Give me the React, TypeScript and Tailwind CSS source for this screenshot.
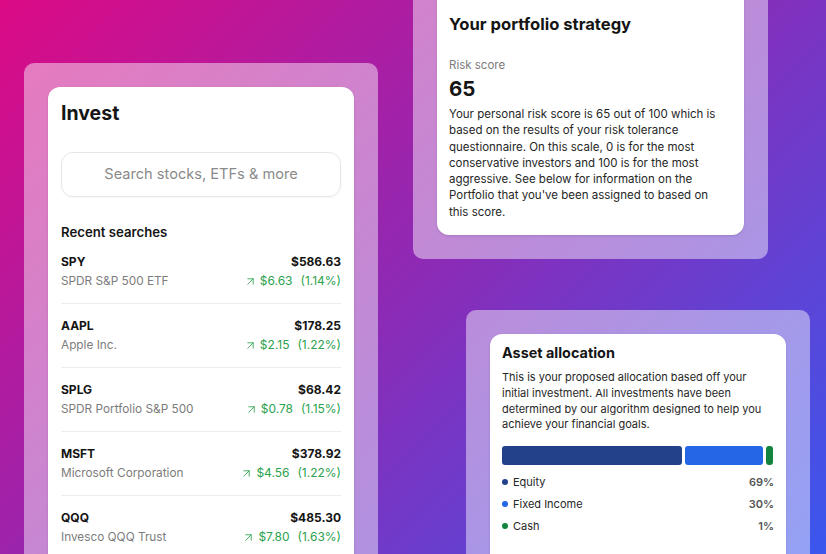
import React from "react";
import { ArrowUpRight } from "lucide-react";

const stocks = [
  { sym: "SPY", name: "SPDR S&P 500 ETF", price: "$586.63", chg: "$6.63", pct: "(1.14%)" },
  { sym: "AAPL", name: "Apple Inc.", price: "$178.25", chg: "$2.15", pct: "(1.22%)" },
  { sym: "SPLG", name: "SPDR Portfolio S&P 500", price: "$68.42", chg: "$0.78", pct: "(1.15%)" },
  { sym: "MSFT", name: "Microsoft Corporation", price: "$378.92", chg: "$4.56", pct: "(1.22%)" },
  { sym: "QQQ", name: "Invesco QQQ Trust", price: "$485.30", chg: "$7.80", pct: "(1.63%)" },
];

const allocation = [
  { label: "Equity", pct: "69%", dot: "bg-[#22418a]" },
  { label: "Fixed Income", pct: "30%", dot: "bg-[#2466e6]" },
  { label: "Cash", pct: "1%", dot: "bg-[#13843e]" },
];

const InvestCard = () => (
  <div className="absolute left-[24px] top-[63px] h-[540px] w-[354px] rounded-[10px] bg-white/45 p-[24px]">
    <div className="h-full rounded-[12px] bg-white px-[13px] pt-[12px] shadow-sm">
      <h1 className="text-[19.5px] font-bold leading-[28px] text-[#151515]">Invest</h1>
      <div className="mt-[25px] flex h-[45px] items-center justify-center rounded-[12px] border border-[#e6e6e6] text-[14.6px] text-[#8a8a8a] shadow-[0_1px_2px_rgba(0,0,0,0.04)]">
        Search stocks, ETFs &amp; more
      </div>
      <h2 className="mt-[27px] text-[13.2px] font-semibold leading-[16px] text-[#151515]">Recent searches</h2>
      <ul>
        {stocks.map((s, i) => (
          <li
            key={s.sym}
            className={
              "flex justify-between pb-[13px] pt-[13px] " +
              (i < stocks.length - 1 ? "border-b border-[#ececec]" : "")
            }
          >
            <div className="flex flex-col gap-[1px]">
              <span className="text-[12px] font-bold leading-[18px] text-[#151515]">{s.sym}</span>
              <span className="text-[11.8px] leading-[18px] text-[#7c7c7c]">{s.name}</span>
            </div>
            <div className="flex flex-col items-end gap-[1px]">
              <span className="text-[12px] font-bold leading-[18px] text-[#151515]">{s.price}</span>
              <span className="flex items-center text-[12px] leading-[18px] text-[#2ca24e]">
                <ArrowUpRight size={13} strokeWidth={1.6} className="mr-[3px]" />
                {s.chg}
                <span className="ml-[8px]">{s.pct}</span>
              </span>
            </div>
          </li>
        ))}
      </ul>
    </div>
  </div>
);

const StrategyCard = () => (
  <div className="absolute left-[413px] top-[-40px] h-[299px] w-[355px] rounded-[10px] bg-white/45 p-[24px]">
    <div className="h-full rounded-[12px] bg-white px-[12px] pt-[28px] shadow-sm">
      <h2 className="text-[16.6px] font-bold leading-[24px] text-[#151515]">Your portfolio strategy</h2>
      <p className="mt-[20px] text-[11.5px] leading-[18px] text-[#7c7c7c]">Risk score</p>
      <p className="mt-[2px] text-[20.5px] font-bold leading-[26px] text-[#151515]">65</p>
      <p className="mt-[4px] max-w-[272px] text-[11.5px] leading-[16.3px] text-[#262626]">
        Your personal risk score is 65 out of 100 which is based on the results of your risk tolerance
        questionnaire. On this scale, 0 is for the most conservative investors and 100 is for the most
        aggressive. See below for information on the Portfolio that you've been assigned to based on
        this score.
      </p>
    </div>
  </div>
);

const AllocationCard = () => (
  <div className="absolute left-[466px] top-[310px] h-[290px] w-[344px] rounded-[10px] bg-white/45 p-[24px]">
    <div className="h-full rounded-[12px] bg-white px-[12px] pt-[9px] shadow-sm">
      <h2 className="text-[14.4px] font-bold leading-[20px] text-[#151515]">Asset allocation</h2>
      <p className="mt-[7px] text-[11px] leading-[15.8px] text-[#262626]">
        This is your proposed allocation based off your initial investment. All investments have been
        determined by our algorithm designed to help you achieve your financial goals.
      </p>
      <div className="mt-[13px] flex h-[19px] gap-[3px]">
        <div className="w-[180px] rounded-[3px] bg-[#22418a]" />
        <div className="w-[78px] rounded-[3px] bg-[#2466e6]" />
        <div className="w-[7px] rounded-[3px] bg-[#13843e]" />
      </div>
      <ul className="mt-[6px]">
        {allocation.map((a) => (
          <li key={a.label} className="flex h-[22px] items-center justify-between text-[11px]">
            <span className="flex items-center text-[#262626]">
              <span className={"mr-[5px] h-[6px] w-[6px] rounded-full " + a.dot} />
              {a.label}
            </span>
            <span className="font-semibold text-[#555555]">{a.pct}</span>
          </li>
        ))}
      </ul>
    </div>
  </div>
);

export default function App() {
  return (
    <div
      className="relative h-[554px] w-[826px] overflow-hidden bg-[linear-gradient(135deg,#dc0a85_0%,#8d2ab5_50%,#3a57ee_100%)]"
      style={{ fontFamily: "Inter, 'Noto Sans', sans-serif" }}
    >
      <InvestCard />
      <StrategyCard />
      <AllocationCard />
    </div>
  );
}
